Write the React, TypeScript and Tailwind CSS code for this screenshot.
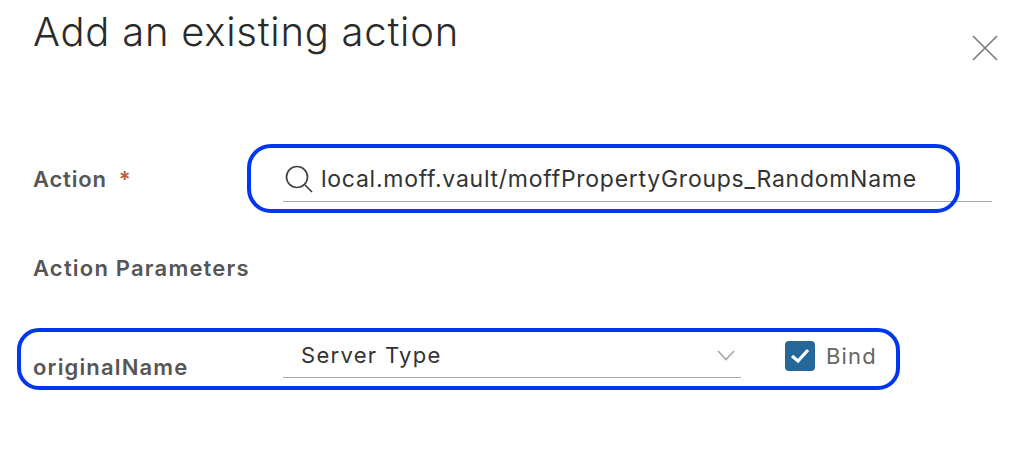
export default function App() {
  return (
    <div className="relative h-[450px] w-[1024px] overflow-hidden bg-white font-['Inter','Liberation_Sans',sans-serif] text-[#333]">
      <div className="flex items-start justify-between pl-[33px] pr-[26px]">
        <h1 className="mt-[8px] text-[40px] leading-[48px] font-light tracking-[0.75px] text-[#2b2b2b]">Add an existing action</h1>
        <svg className="mt-[35px]" width="26" height="26" viewBox="0 0 26 26" fill="none" stroke="#7c7c7c" strokeWidth="1.7">
          <path d="M1 1 L25 25 M25 1 L1 25" />
        </svg>
      </div>

      <div className="mt-[93px] flex items-start pl-[33px] pr-[32px]">
        <div className="flex w-[250px] items-center pt-[11px] text-[22px] leading-[28px] font-semibold tracking-[0.8px] text-[#565656]">
          Action
          <span className="ml-[12px] text-[#c25438]">*</span>
        </div>
        <div className="flex h-[48px] flex-1 items-center border-b-[1.5px] border-[#a8a8a8] pl-[2px] pt-[2px]">
          <svg width="28" height="28" viewBox="0 0 28 28" fill="none" stroke="#444" strokeWidth="1.7">
            <circle cx="12" cy="12" r="10.5" />
            <path d="M20 20 L27 27" />
          </svg>
          <span className="ml-[8px] text-[23px] leading-[28px] tracking-[0.74px] text-[#333]">local.moff.vault/moffPropertyGroups_RandomName</span>
        </div>
      </div>

      <div className="mt-[52px] pl-[33px] text-[22px] leading-[28px] font-semibold tracking-[1.2px] text-[#565656]">Action Parameters</div>

      <div className="mt-[59px] flex items-start pl-[33px]">
        <div className="w-[250px] pt-[12px] text-[22px] leading-[28px] font-semibold tracking-[1.15px] text-[#565656]">originalName</div>
        <div className="flex h-[37px] w-[458px] items-start justify-between border-b-[1.5px] border-[#a8a8a8] pl-[18px] pr-[6px]">
          <span className="text-[22px] leading-[28px] tracking-[1.3px] text-[#333]">Server Type</span>
          <svg className="mt-[9px]" width="18" height="11" viewBox="0 0 18 11" fill="none" stroke="#a9a9a9" strokeWidth="1.7">
            <path d="M1 1 L9 9.5 L17 1" />
          </svg>
        </div>
        <div className="ml-[44px] flex h-[30px] w-[30px] shrink-0 items-center justify-center rounded-[4px] bg-[#266799]">
          <svg width="20" height="16" viewBox="0 0 20 16" fill="none" stroke="#fff" strokeWidth="3.2">
            <path d="M2 8 L8 13 L18 2" />
          </svg>
        </div>
        <span className="ml-[11px] text-[22px] leading-[30px] tracking-[1.2px] text-[#666]">Bind</span>
      </div>

      <div className="absolute left-[247px] top-[144px] h-[69px] w-[713px] rounded-[24px] border-[4.5px] border-[#0036f0]" />
      <div className="absolute left-[17px] top-[328px] h-[62px] w-[883px] rounded-[22px] border-[4.5px] border-[#0036f0]" />
    </div>
  );
}
